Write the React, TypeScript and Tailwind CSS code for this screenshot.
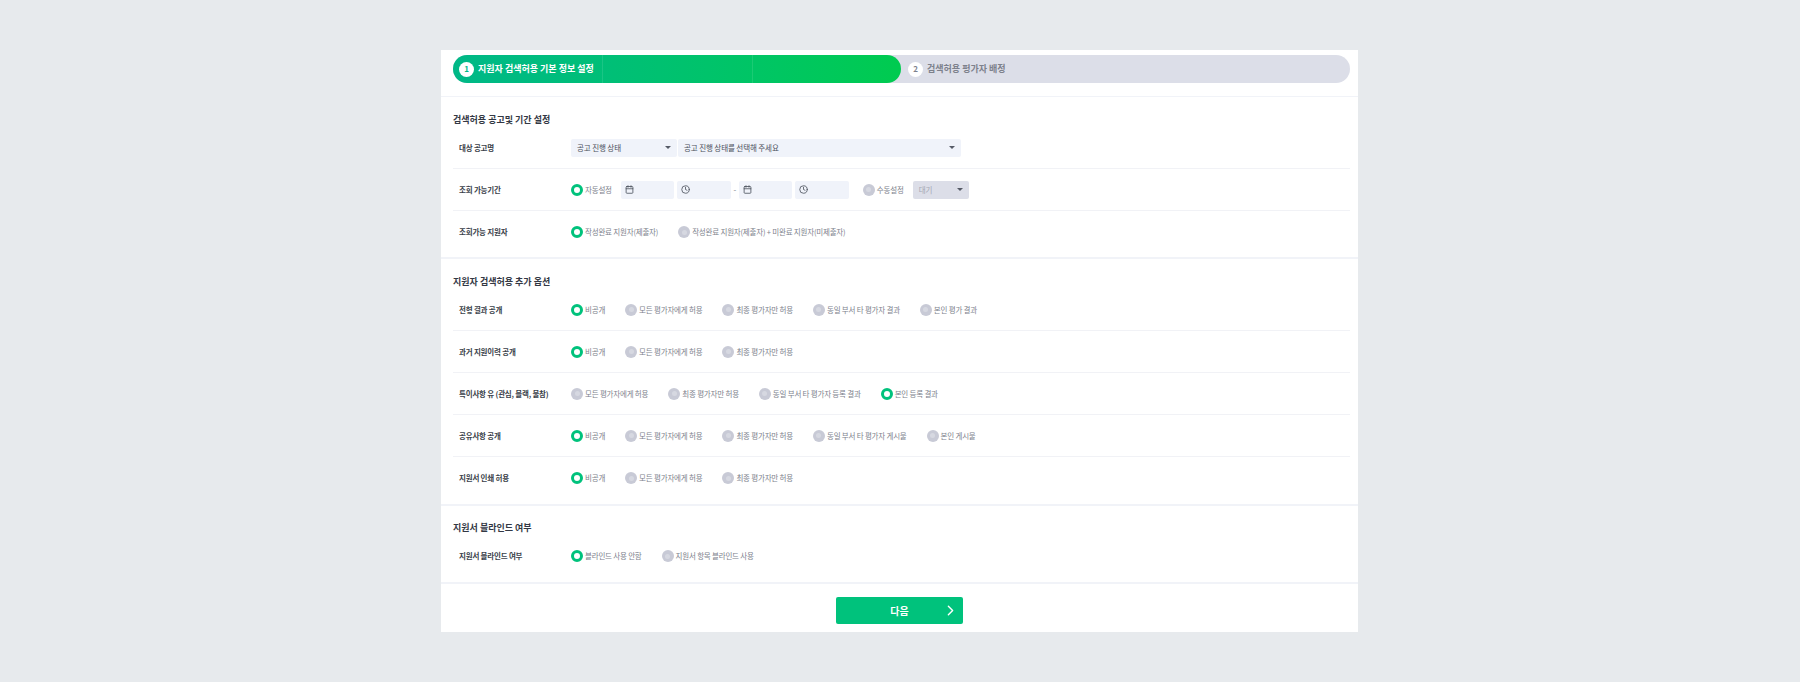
import React from "react";
import { Calendar, Clock, ChevronRight } from "lucide-react";

const ALL = "모든 평가자에게 허용";
const FINAL = "최종 평가자만 허용";

interface OptionRow {
  label: string;
  options: string[];
  selected: number;
}

const extraRows: OptionRow[] = [
  { label: "전형 결과 공개", options: ["비공개", ALL, FINAL, "동일 부서 타 평가자 결과", "본인 평가 결과"], selected: 0 },
  { label: "과거 지원이력 공개", options: ["비공개", ALL, FINAL], selected: 0 },
  { label: "특이사항 유 (관심, 블랙, 불참)", options: [ALL, FINAL, "동일 부서 타 평가자 등록 결과", "본인 등록 결과"], selected: 3 },
  { label: "공유사항 공개", options: ["비공개", ALL, FINAL, "동일 부서 타 평가자 게시물", "본인 게시물"], selected: 0 },
  { label: "지원서 인쇄 허용", options: ["비공개", ALL, FINAL], selected: 0 },
];

function Radio({ text, on }: { text: string; on?: boolean }) {
  return (
    <div className="flex items-center gap-[2px]">
      {on ? (
        <span className="w-3 h-3 rounded-full border-[3.5px] border-[#00c27c] bg-white" />
      ) : (
        <span className="w-3 h-3 rounded-full bg-[#c8cad6] flex items-center justify-center">
          <span className="w-[5px] h-[5px] rounded-full bg-[#d6d8e1]" />
        </span>
      )}
      <span className="text-[7.5px] leading-3 tracking-[-0.2px] text-[#7d818c] whitespace-nowrap">{text}</span>
    </div>
  );
}

function Caret({ className }: { className: string }) {
  return <span className={`w-0 h-0 border-x-[3px] border-x-transparent border-t-[3px] ${className}`} />;
}

function Select({ text, className }: { text: string; className: string }) {
  return (
    <div className={`h-[18px] rounded-[2px] bg-[#f0f3fa] flex items-center justify-between pl-1.5 pr-[6px] ${className}`}>
      <span className="text-[7.5px] tracking-[-0.1px] text-[#4b505b] whitespace-nowrap">{text}</span>
      <Caret className="border-t-[#555a66]" />
    </div>
  );
}

function TimeInput({ icon, className }: { icon: "date" | "time"; className: string }) {
  const Icon = icon === "date" ? Calendar : Clock;
  return (
    <div className={`h-[18px] rounded-[2px] bg-[#f0f3fa] flex items-center pl-[4px] ${className}`}>
      <Icon size={9} strokeWidth={2.2} className="text-[#4d525e]" />
    </div>
  );
}

function Row({ label, last, children }: { label: string; last?: boolean; children: React.ReactNode }) {
  return (
    <div className={`h-[42px] flex items-center pl-1.5 ${last ? "" : "border-b border-[#f1f2f6]"}`}>
      <div className="w-[112px] shrink-0 text-[7.5px] tracking-[-0.2px] font-bold text-[#3a3f4a] whitespace-nowrap">{label}</div>
      {children}
    </div>
  );
}

function Section({ title, headClass, bodyClass, children }: { title: string; headClass: string; bodyClass: string; children: React.ReactNode }) {
  return (
    <section className={`pl-3 pr-2 border-b-2 border-[#f1f3f8] ${bodyClass}`}>
      <h2 className={`text-[9px] leading-[14px] font-bold text-[#333844] ${headClass}`}>{title}</h2>
      {children}
    </section>
  );
}

function Options({ row }: { row: OptionRow }) {
  return (
    <div className="flex items-center gap-5">
      {row.options.map((o, i) => (
        <Radio key={o} text={o} on={i === row.selected} />
      ))}
    </div>
  );
}

export default function App() {
  return (
    <div className="min-h-[682px] bg-[#e7eaed] pt-[50px] pr-px flex justify-center font-['Noto_Sans_CJK_KR','Noto_Sans',sans-serif]">
      <div className="w-[917px] h-[582px] bg-white">
        <div className="pl-3 pr-2 pt-[5px] pb-[13px] border-b border-[#f1f3f8]">
          <div className="h-7 rounded-full bg-[#dcdee8] flex items-center">
            <div className="w-[448px] h-7 rounded-full bg-gradient-to-r from-[#00b887] to-[#00cb4f] flex shrink-0">
              <div className="w-[150px] flex items-center pl-[6px] gap-[4px] border-r border-white/10">
                <span className="w-[15px] h-[15px] rounded-full bg-white flex items-center justify-center text-[8px] font-bold text-[#00b887]">1</span>
                <span className="text-[9px] font-bold text-white whitespace-nowrap">지원자 검색허용 기본 정보 설정</span>
              </div>
              <div className="w-[150px] border-r border-white/10" />
            </div>
            <div className="flex items-center pl-[7px] gap-[4px]">
              <span className="w-[15px] h-[15px] rounded-full bg-white flex items-center justify-center text-[8px] font-bold text-[#7d818c]">2</span>
              <span className="text-[9px] font-bold text-[#7d818c] whitespace-nowrap">검색허용 평가자 배정</span>
            </div>
          </div>
        </div>

        <Section title="검색허용 공고및 기간 설정" headClass="pt-4 h-[30px]" bodyClass="pb-[4px]">
          <Row label="대상 공고명">
            <div className="flex gap-px">
              <Select text="공고 진행 상태" className="w-[106px]" />
              <Select text="공고 진행 상태를 선택해 주세요" className="w-[283px]" />
            </div>
          </Row>
          <Row label="조회 가능기간">
            <Radio text="자동설정" on />
            <div className="flex items-center ml-[9px]">
              <TimeInput icon="date" className="w-[53px]" />
              <TimeInput icon="time" className="w-[54px] ml-[3px]" />
              <span className="w-2 text-center text-[8px] text-[#7d818c]">-</span>
              <TimeInput icon="date" className="w-[53px]" />
              <TimeInput icon="time" className="w-[54px] ml-[3px]" />
            </div>
            <div className="ml-[14px]">
              <Radio text="수동설정" />
            </div>
            <div className="ml-[9px] w-[56px] h-[18px] rounded-[2px] bg-[#dcdee8] flex items-center justify-between px-[6px]">
              <span className="text-[7.5px] text-[#a4a7b3]">대기</span>
              <Caret className="border-t-[#555a66]" />
            </div>
          </Row>
          <Row label="조회가능 지원자" last>
            <Options row={{ label: "", options: ["작성완료 지원자(제출자)", "작성완료 지원자(제출자) + 미완료 지원자(미제출자)"], selected: 0 }} />
          </Row>
        </Section>

        <Section title="지원자 검색허용 추가 옵션" headClass="pt-4 h-[30px]" bodyClass="pb-[5px]">
          {extraRows.map((row, i) => (
            <Row key={row.label} label={row.label} last={i === extraRows.length - 1}>
              <Options row={row} />
            </Row>
          ))}
        </Section>

        <Section title="지원서 블라인드 여부" headClass="pt-[15px] h-[29px]" bodyClass="pb-[5px]">
          <Row label="지원서 블라인드 여부" last>
            <Options row={{ label: "", options: ["블라인드 사용 안함", "지원서 항목 블라인드 사용"], selected: 0 }} />
          </Row>
        </Section>

        <div className="flex justify-center pt-[13px]">
          <button className="relative w-[127px] h-[27px] rounded-[2px] bg-[#00c27c] flex items-center justify-center text-[10px] font-bold text-white">
            다음
            <ChevronRight size={17} strokeWidth={2} className="absolute right-[4px] top-[5px] text-white" />
          </button>
        </div>
      </div>
    </div>
  );
}
